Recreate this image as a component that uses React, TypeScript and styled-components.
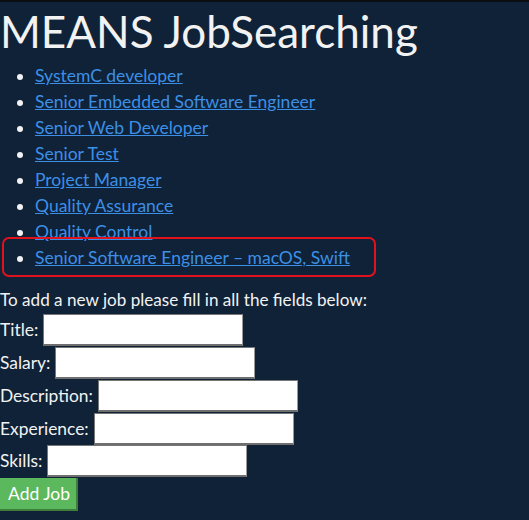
import React from "react";
import styled, { createGlobalStyle } from "styled-components";

const GlobalStyle = createGlobalStyle`
  html, body {
    margin: 0;
    padding: 0;
    background: #0f2238;
  }
  body {
    font-family: Lato, "Open Sans", "Liberation Sans", sans-serif;
    color: #f2f2f2;
  }
`;

const Page = styled.div`
  min-height: 518px;
  border-top: 2px solid #0a0e13;
  background: #0f2238;
`;

const Title = styled.h1`
  margin: 0;
  font-size: 44px;
  font-weight: 400;
  line-height: 58px;
  color: #f2f2f2;
`;

const JobList = styled.ul`
  margin: 3px 0 0 0;
  padding-left: 35px;
  font-size: 17.5px;
  line-height: 26px;
`;

const JobItem = styled.li<{ $highlighted?: boolean }>`
  position: relative;
  &::after {
    content: "";
    display: ${(p) => (p.$highlighted ? "block" : "none")};
    position: absolute;
    left: -33px;
    top: -8px;
    width: 374px;
    height: 40px;
    box-sizing: border-box;
    border: 2px solid #e0131c;
    border-radius: 7px;
    pointer-events: none;
  }
`;

const JobLink = styled.a`
  color: #3d8fe6;
  text-decoration: underline;
`;

const Form = styled.form`
  font-size: 17.4px;
  margin-top: 17px;
`;

const Intro = styled.p`
  margin: 0 0 2px 0;
  font-size: 17.1px;
  line-height: 24px;
`;

const FieldRow = styled.label`
  display: flex;
  align-items: center;
  gap: 5px;
  height: 32.75px;
  line-height: 24px;
`;

const TextInput = styled.input`
  width: 200px;
  height: 32px;
  box-sizing: border-box;
  border: 1px solid #767676;
  border-right-color: #9a9a9a;
  border-bottom: 2px solid #6f6f6f;
  background: #ffffff;
  font-family: inherit;
  font-size: 16px;
  padding: 2px 4px;
  margin: 0;
`;

const SubmitButton = styled.button`
  margin-top: 0;
  height: 33px;
  padding: 0 6px 0 8px;
  background: #5cb85c;
  color: #ffffff;
  font-family: inherit;
  font-size: 17.5px;
  border: none;
  border-right: 2px solid #3f7d3a;
  border-bottom: 2px solid #3f7d3a;
  cursor: pointer;
`;

const jobs = [
  "SystemC developer",
  "Senior Embedded Software Engineer",
  "Senior Web Developer",
  "Senior Test",
  "Project Manager",
  "Quality Assurance",
  "Quality Control",
  "Senior Software Engineer – macOS, Swift",
];

const fields = ["Title", "Salary", "Description", "Experience", "Skills"];

export default function App() {
  return (
    <>
      <GlobalStyle />
      <Page>
        <Title>MEANS JobSearching</Title>
        <JobList>
          {jobs.map((job, i) => (
            <JobItem key={job} $highlighted={i === jobs.length - 1}>
              <JobLink href="#">{job}</JobLink>
            </JobItem>
          ))}
        </JobList>
        <Form onSubmit={(e) => e.preventDefault()}>
          <Intro>To add a new job please fill in all the fields below:</Intro>
          {fields.map((f) => (
            <FieldRow key={f}>
              <span>{f}:</span>
              <TextInput type="text" />
            </FieldRow>
          ))}
          <SubmitButton type="submit">Add Job</SubmitButton>
        </Form>
      </Page>
    </>
  );
}
